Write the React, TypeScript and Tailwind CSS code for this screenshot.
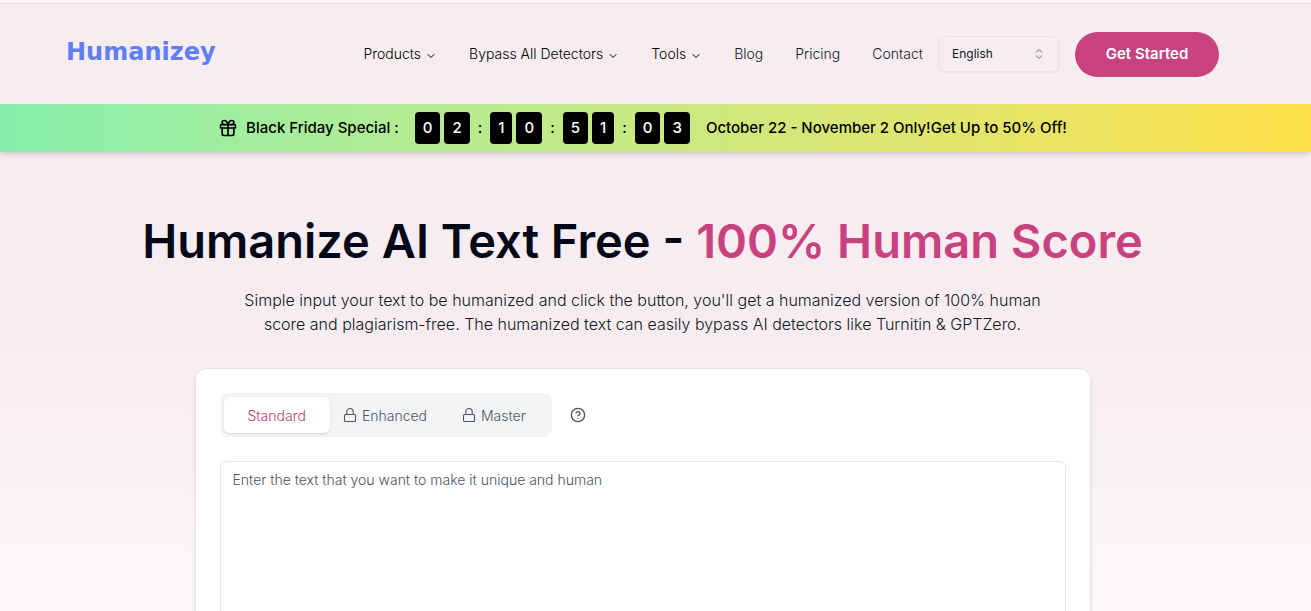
import { ChevronDown, CircleHelp, Gift } from 'lucide-react';

const MENUS = ['Products', 'Bypass All Detectors', 'Tools'];
const LINKS = ['Blog', 'Pricing', 'Contact'];

// days, hours, minutes, seconds
const COUNTDOWN = ['02', '10', '51', '03'];

const LockIcon = () => (
  <svg className="h-4 w-4 shrink-0" viewBox="0 0 16 16" fill="none" stroke="currentColor" strokeWidth="1.1" strokeLinejoin="round" aria-hidden="true">
    <rect x="2.5" y="7.5" width="11" height="7" rx="1" />
    <path d="M4.8 7.5V4.7a3.2 3.2 0 0 1 6.4 0v2.8" />
  </svg>
);

const SortIcon = () => (
  <svg
    className="pointer-events-none absolute right-3 h-4 w-4 text-gray-500"
    viewBox="0 0 16 16"
    fill="none"
    stroke="currentColor"
    strokeLinecap="round"
    strokeLinejoin="round"
    aria-hidden="true"
  >
    <path d="M5.2 6.2 8 3.6l2.8 2.6M5.2 9.8 8 12.4l2.8-2.6" />
  </svg>
);

const Header = () => (
  <header className="flex h-[101px] items-center justify-between border-t border-[#e3d9dd] pr-[92px] pl-[66px]">
    <a href="#" className="pb-1 font-['DejaVu_Sans',sans-serif] text-[24px] leading-8 font-bold text-[#5f7ef3]">
      Humanizey
    </a>

    <div className="flex items-center gap-4">
      <nav className="flex items-center gap-8 text-[14px] leading-5 font-light">
        {MENUS.map((label) => (
          <button key={label} type="button" className="flex items-center gap-1 text-black">
            {label}
            <ChevronDown className="mt-1 h-3 w-3" strokeWidth={2} />
          </button>
        ))}
        {LINKS.map((label) => (
          <a key={label} href="#" className="text-gray-900">
            {label}
          </a>
        ))}
      </nav>

      <div className="relative flex items-center">
        <select
          aria-label="Language"
          className="h-9 w-[120px] appearance-none rounded-md border border-[#ebe1e5] bg-transparent px-3 text-[12px] text-gray-900 shadow-xs"
        >
          <option>English</option>
        </select>
        <SortIcon />
      </div>

      <button type="button" className="h-[45px] w-36 rounded-full bg-[#c8427f] text-[15px] font-semibold text-white">
        Get Started
      </button>
    </div>
  </header>
);

const Digit = ({ value }: { value: string }) => (
  <span className="flex h-8 items-center rounded bg-black px-2 text-white">{value}</span>
);

const Banner = () => (
  <div className="flex h-12 items-center justify-center bg-gradient-to-r from-[#86efac] to-[#fde047] pr-[26px] text-[15px] font-medium text-black shadow-md">
    <Gift className="mr-2 h-5 w-5" strokeWidth={2} />
    <span className="mr-4">Black Friday Special :</span>
    <div className="flex items-center gap-2">
      {COUNTDOWN.map((pair, i) => (
        <div key={i} className="flex items-center gap-2">
          {i > 0 && <span>:</span>}
          <div className="flex gap-1">
            <Digit value={pair[0]} />
            <Digit value={pair[1]} />
          </div>
        </div>
      ))}
    </div>
    <span className="ml-4">October 22 - November 2 Only!Get Up to 50% Off!</span>
  </div>
);

const LockedTab = ({ label }: { label: string }) => (
  <button type="button" role="tab" aria-selected="false" className="flex items-center gap-1 pr-[22px] pl-3">
    <LockIcon />
    {label}
  </button>
);

const Editor = () => (
  <section className="w-full max-w-4xl rounded-xl border border-[#e8e4e6] bg-white p-6 shadow-md">
    <div className="flex items-center gap-[18px]">
      <div role="tablist" className="flex h-11 rounded-lg bg-gray-100 p-1 text-[14px] font-light text-gray-600">
        <button type="button" role="tab" aria-selected="true" className="rounded-md bg-white px-6 text-[#c03a70] shadow">
          Standard
        </button>
        <LockedTab label="Enhanced" />
        <LockedTab label="Master" />
      </div>
      <button type="button" aria-label="Help" className="text-gray-600">
        <CircleHelp className="h-4 w-4" />
      </button>
    </div>

    <textarea
      aria-label="Text to humanize"
      placeholder="Enter the text that you want to make it unique and human"
      className="mt-6 block h-80 w-full resize-none rounded-md border border-gray-200 px-3 py-2 text-[14px] leading-5 font-light placeholder:text-gray-600"
    />
  </section>
);

export default function App() {
  return (
    <div className="min-h-screen bg-white bg-gradient-to-b from-[#f7edf0] from-40% to-white to-90% font-['Inter',sans-serif]">
      <div className="h-[3px] bg-[#fdf6f9]" />
      <Header />
      <Banner />
      <main className="flex flex-col items-center pt-[60px] pr-[26px] pb-10 text-center">
        <h1 className="text-[47px] leading-[58px] font-semibold text-[#020817]">
          Humanize AI Text Free - <span className="text-[#c8427f]">100% Human Score</span>
        </h1>
        <p className="mt-[18px] mb-8 text-[16px] leading-6 font-light text-gray-900">
          Simple input your text to be humanized and click the button, you'll get a humanized version of 100% human
          <br />
          score and plagiarism-free. The humanized text can easily bypass AI detectors like Turnitin & GPTZero.
        </p>
        <Editor />
      </main>
    </div>
  );
}
